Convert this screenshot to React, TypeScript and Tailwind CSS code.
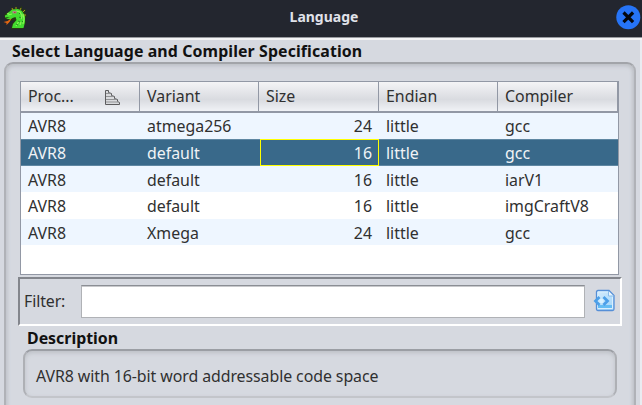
import React from "react";

type Row = { variant: string; size: string; compiler: string; style: string; selected?: boolean };

const rows: Row[] = [
  { variant: "atmega256", size: "24", compiler: "gcc", style: "h-[26px] bg-[#eef6ff] leading-[27px]" },
  { variant: "default", size: "16", compiler: "gcc", style: "h-[27px] bg-[#39698a] text-[#f0f3f6] leading-[28px] shadow-[inset_0_1px_0_#5f87a2,inset_0_-1px_0_#5f87a2]", selected: true },
  { variant: "default", size: "16", compiler: "iarV1", style: "h-[26px] bg-[#eef6ff] leading-[28px]" },
  { variant: "default", size: "16", compiler: "imgCraftV8", style: "h-[27px] bg-white leading-[28px]" },
  { variant: "Xmega", size: "24", compiler: "gcc", style: "h-[26px] bg-[#eef6ff] leading-[28px]" },
];

const columns = "grid grid-cols-[119px_119px_120px_119px_1fr]";

function DragonIcon() {
  return (
    <svg className="h-[24px] w-[24px]" viewBox="3 6 24 24">
      <path d="M11 10V7l3 2 2-3 2 3 4-3v4l4-1-1 4 2 3-2 3 1 4-2 3-1 3H11l1-5 3-4-5 1-5-2-1-4 4-3z" fill="#263a12" />
      <path d="m9 12 3-2.500 6-.5 4 2 3 5v6l-1.500 6H12l1-4 3.500-4-1-3-3 1-2 1.500L6 18.500l4-1.500-5 .5v-2l2-1z" fill="#43dc2f" />
      <path d="m12 8 1 2m3-3v2m5-1-1 2m5 0-2 2m3 3h-2" stroke="#a99420" strokeWidth="1" />
      <path d="m16 11 4 1 2 4-1 3m2-5 1 5-1 5m-4-3-3 5m5-4-1 3M8 15l4-1m-5 0 2-1" fill="none" stroke="#8af454" strokeWidth="1.2" />
      <path d="m19 13 1 1m-1 3 2 1m-3 3 2 1m-4 2 2 1m4-4 1 1" stroke="#238b20" strokeWidth="1" />
      <path d="M12.500 11h4v2.500h-4z" fill="#a78b80" />
      <path d="M14 12h1.500v1H14z" fill="#c53940" />
      <path d="m11.500 18.500-2 3.500-3 3v-2l-3-1 4-1z" fill="#e36612" />
    </svg>
  );
}

function SortIcon() {
  return (
    <svg className="h-[17px] w-[18px]" viewBox="0 0 18 17">
      <path d="M1.500 1.500h3v2l3 1v2l3 1v2l3 1v2l2 1v2h-14z" fill="#d9dadd" stroke="#5c5c5e" strokeLinejoin="round" />
      <path d="M2 4.500h4M2 7.500h7M2 10.500h10M2 13h12" stroke="#929395" />
    </svg>
  );
}

function FilterIcon() {
  return (
    <svg className="h-[23px] w-[22px]" viewBox="0 0 22 23">
      <defs>
        <linearGradient id="page" x2="1" y2="1"><stop stopColor="#d6ecfc" /><stop offset="1" stopColor="#9dd4fa" /></linearGradient>
      </defs>
      <path d="M5 1.500h11l5 5v13.500q0 1.500-1.500 1.500H5q-1.500 0-1.500-1.500V3q0-1.500 1.500-1.500z" fill="url(#page)" stroke="#568fd7" strokeWidth="1.3" />
      <path d="M5 3h10l4.500 4.500v12H5z" fill="none" stroke="#d9effd" />
      <path d="M15.500 2v5h5" fill="#e8f5ff" stroke="#8bbdeb" />
      <path d="M5 16h14v3H5z" fill="#64bdf4" />
      <path d="m6.500 8-4 4 4 4m4-8 4 4-4 4" fill="none" stroke="#4c9fe8" strokeWidth="2.8" />
      <circle cx="8.500" cy="12" r="2.200" fill="#d9f2ff" />
    </svg>
  );
}

export default function App() {
  return (
    <div className="flex h-[405px] w-[642px] flex-col overflow-hidden bg-[#d6d9e0] font-['Noto_Sans',sans-serif] text-[15.9px] leading-[26px] text-[#303030]">
      <header className="grid h-[37px] shrink-0 grid-cols-[36px_1fr_36px] bg-[#23262f]">
        <div className="pt-[6px] pl-[3px]"><DragonIcon /></div>
        <h1 className="pt-[4px] pl-[6px] text-center text-[14px] font-bold text-[#e0e2ea]">Language</h1>
        <div className="pt-[5px] pl-[10px]">
          <svg className="h-[25px] w-[25px]" viewBox="0 0 25 25">
            <circle cx="12.3" cy="12.3" r="12" fill="#2674f7" />
            <path d="m7.500 7.500 9.600 9.600m0-9.600-9.600 9.600" stroke="#05080e" strokeWidth="3.2" />
          </svg>
        </div>
      </header>
      <main className="flex min-h-0 flex-1 flex-col border-t border-[#999ba0] shadow-[inset_0_2px_0_#f4f4f6,inset_-2px_0_0_#e9ecf1]">
        <h2 className="h-[24px] shrink-0 pl-[12px] text-[15.9px] font-bold tracking-[0.11px] text-[#111]">Select Language and Compiler Specification</h2>
        <section className="mr-[6px] ml-[4px] h-[370px] shrink-0 rounded-[9px] border-2 border-[#b0b2b7] border-t-[#a2a4a9] pt-[17px] pr-[14px] pl-[12px] shadow-[inset_0_2px_4px_#bec1c7,inset_2px_0_3px_#c9ccd2,inset_-2px_0_3px_#c6c9cf]">
          <div className="ml-[2px] h-[194px] w-[599px] border border-[#9298a5] bg-white">
            <div className={columns + " h-[31px] border-b-2 border-[#9298a5] bg-linear-to-b from-[#f4f4f6] via-[#d9dbe0] via-60% to-[#f0f2f6]"}>
              {["Proc...", "Variant", "Size", "Endian", "Compiler"].map((name, i) => (
                <div key={name} className="flex border-r border-[#9298a5] pt-[1px] pl-[7px]">
                  <span>{name}</span>
                  {i === 0 && <span className="pt-[6px] pl-[30px]"><SortIcon /></span>}
                </div>
              ))}
            </div>
            {rows.map((row, i) => (
              <div key={i} className={columns + " " + row.style}>
                <span className="pl-[7px]">AVR8</span>
                <span className="pl-[7px]">{row.variant}</span>
                {row.selected ? (
                  <span className="ml-px h-[27px] border border-[#ffff00] pr-[6px] text-right leading-[26px]">{row.size}</span>
                ) : (
                  <span className="pr-[7px] text-right">{row.size}</span>
                )}
                <span className="pl-[7px]">little</span>
                <span className="pl-[7px]">{row.compiler}</span>
              </div>
            ))}
          </div>
          <div className="mt-[2px] flex h-[49px] w-[604px] border-2 border-t-[#83868d] border-r-white border-b-white border-l-[#83868d] pt-[6px]">
            <label className="w-[61px] pt-[3px] pl-[4px] tracking-[-0.1px]">Filter:</label>
            <div className="h-[33px] w-[504px] border border-[#b0b2b6] border-t-[#8b8e94] bg-white shadow-[inset_0_1px_0_#c8c9cc]" />
            <div className="pt-[4px] pl-[8px]"><FilterIcon /></div>
          </div>
          <h3 className="h-[23px] pl-[9px] leading-[24px] font-bold text-[#111]">Description</h3>
          <div className="ml-[5px] h-[49px] w-[594px] rounded-[9px] border-2 border-[#aeb0b5] border-t-[#9b9ea4] border-b-[#c3c5ca] pt-[12px] pl-[11px] tracking-[-0.07px] shadow-[inset_0_2px_4px_#bdc0c6]">
            AVR8 with 16-bit word addressable code space
          </div>
        </section>
      </main>
    </div>
  );
}
